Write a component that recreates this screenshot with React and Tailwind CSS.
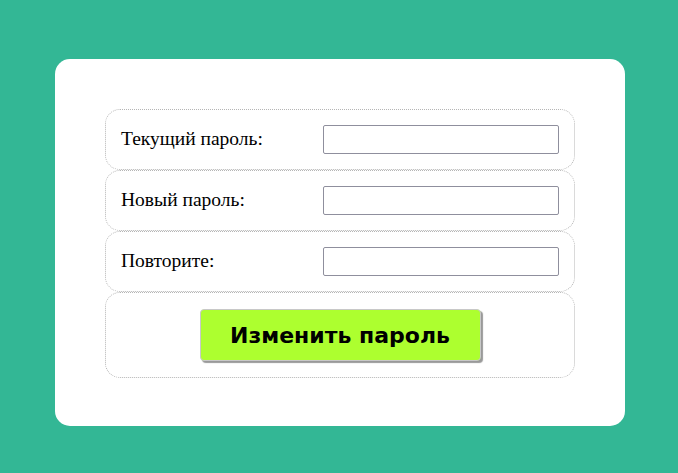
import React, { useState } from "react";

const Row = ({ label, name, value, onChange }) => (
  <div className="flex items-center h-[61px] border border-dotted border-[#b5b5b5] rounded-[15px] pl-[15px] pr-[15px]">
    <label htmlFor={name} className="w-[202px] shrink-0 mb-[2px] text-[19.5px] text-black" style={{ fontFamily: '"Liberation Serif", serif' }}>
      {label}
    </label>
    <input
      id={name}
      name={name}
      type="password"
      value={value}
      onChange={onChange}
      className="w-[236px] h-[29px] border border-[#8f8f9d] rounded-[2px] bg-white px-1 outline-none"
    />
  </div>
);

export default function App() {
  const [form, setForm] = useState({ current: "", next: "", repeat: "" });

  const handleChange = e => {
    const { name, value } = e.target;
    setForm(prev => ({ ...prev, [name]: value }));
  };

  return (
    <div className="w-full h-[473px] bg-[#33b795] pt-[59px] pl-[55px]">
      <div className="w-[570px] h-[367px] bg-white rounded-[15px] p-[50px]">
        <form onSubmit={e => e.preventDefault()} className="flex flex-col">
          <Row label="Текущий пароль:" name="current" value={form.current} onChange={handleChange} />
          <Row label="Новый пароль:" name="next" value={form.next} onChange={handleChange} />
          <Row label="Повторите:" name="repeat" value={form.repeat} onChange={handleChange} />
          <div className="flex items-center justify-center h-[86px] border border-dotted border-[#b5b5b5] rounded-[15px]">
            <button
              type="submit"
              className="w-[281px] h-[52px] bg-[#adff2f] border border-[#c8c8c8] rounded-[4px] shadow-[2px_2px_1px_#999] text-[22px] font-bold text-black"
              style={{ fontFamily: '"DejaVu Sans", Verdana, sans-serif' }}
            >
              Изменить пароль
            </button>
          </div>
        </form>
      </div>
    </div>
  );
}
